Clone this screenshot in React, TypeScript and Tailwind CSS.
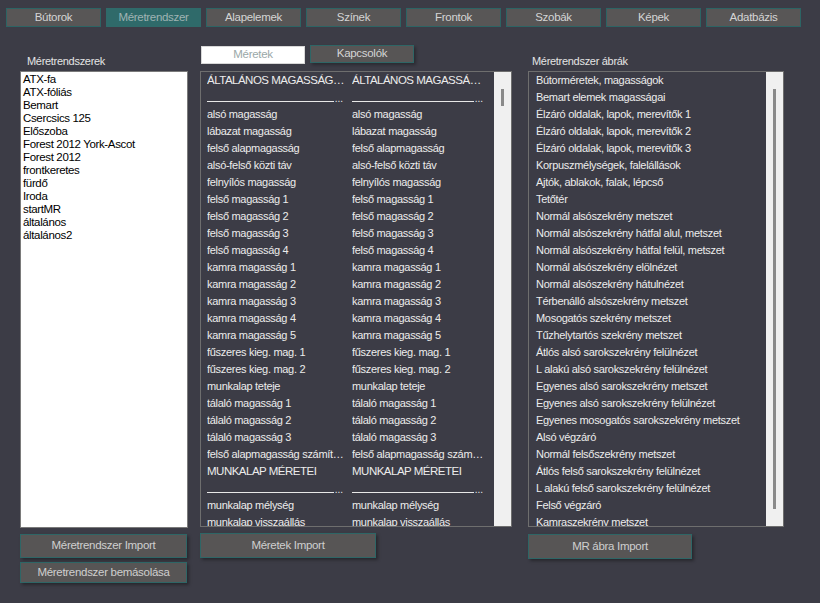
import React from "react";

const tabs = ["Bútorok", "Méretrendszer", "Alapelemek", "Színek", "Frontok", "Szobák", "Képek", "Adatbázis"];

const systems = [
  "ATX-fa",
  "ATX-fóliás",
  "Bemart",
  "Csercsics 125",
  "Előszoba",
  "Forest 2012 York-Ascot",
  "Forest 2012",
  "frontkeretes",
  "fürdő",
  "Iroda",
  "startMR",
  "általános",
  "általános2",
];

type Row = { t: string; kind?: "head" | "line" };

const sizes: Row[] = [
  { t: "ÁLTALÁNOS MAGASSÁGOK", kind: "head" },
  { t: "____________________________________", kind: "line" },
  { t: "alsó magasság" },
  { t: "lábazat magasság" },
  { t: "felső alapmagasság" },
  { t: "alsó-felső közti táv" },
  { t: "felnyílós magasság" },
  { t: "felső magasság 1" },
  { t: "felső magasság 2" },
  { t: "felső magasság 3" },
  { t: "felső magasság 4" },
  { t: "kamra magasság 1" },
  { t: "kamra magasság 2" },
  { t: "kamra magasság 3" },
  { t: "kamra magasság 4" },
  { t: "kamra magasság 5" },
  { t: "fűszeres kieg. mag. 1" },
  { t: "fűszeres kieg. mag. 2" },
  { t: "munkalap teteje" },
  { t: "tálaló magasság 1" },
  { t: "tálaló magasság 2" },
  { t: "tálaló magasság 3" },
  { t: "felső alapmagasság számítása" },
  { t: "MUNKALAP MÉRETEI", kind: "head" },
  { t: "____________________________________", kind: "line" },
  { t: "munkalap mélység" },
  { t: "munkalap visszaállás" },
];

const figures = [
  "Bútorméretek, magasságok",
  "Bemart elemek magasságai",
  "Élzáró oldalak, lapok, merevítők 1",
  "Élzáró oldalak, lapok, merevítők 2",
  "Élzáró oldalak, lapok, merevítők 3",
  "Korpuszmélységek, falelállások",
  "Ajtók, ablakok, falak, lépcső",
  "Tetőtér",
  "Normál alsószekrény metszet",
  "Normál alsószekrény hátfal alul, metszet",
  "Normál alsószekrény hátfal felül, metszet",
  "Normál alsószekrény elölnézet",
  "Normál alsószekrény hátulnézet",
  "Térbenálló alsószekrény metszet",
  "Mosogatós szekrény metszet",
  "Tűzhelytartós szekrény metszet",
  "Átlós alsó sarokszekrény felülnézet",
  "L alakú alsó sarokszekrény felülnézet",
  "Egyenes alsó sarokszekrény metszet",
  "Egyenes alsó sarokszekrény felülnézet",
  "Egyenes mosogatós sarokszekrény metszet",
  "Alsó végzáró",
  "Normál felsőszekrény metszet",
  "Átlós felső sarokszekrény felülnézet",
  "L alakú felső sarokszekrény felülnézet",
  "Felső végzáró",
  "Kamraszekrény metszet",
];

const font = "font-['Liberation_Sans',Arial,sans-serif]";

function Btn({ label, w, h }: { label: string; w: string; h: string }) {
  return (
    <div
      className={`${w} ${h} flex items-center justify-center bg-[#575555] border border-[#2e6666] text-[#cfcfcf] text-[11.5px] tracking-[-0.3px] shadow-[2px_2px_3px_rgba(0,0,0,0.35)]`}
    >
      {label}
    </div>
  );
}

function Cell({ r, w }: { r: Row; w: string }) {
  if (r.kind === "line") {
    return (
      <div className={`${w} h-[17px] flex items-end pb-[2px] overflow-hidden`}>
        <div className="flex-1 h-[1px] bg-[#e8e8e8] mb-[2px]" />
        <span className="text-[10px] leading-[10px] ml-[1px] mr-[3px]">...</span>
      </div>
    );
  }
  return (
    <div
      className={`${w} h-[17px] leading-[17px] whitespace-nowrap overflow-hidden text-ellipsis ${
        r.kind === "head" ? "text-[11.5px] tracking-[-0.5px]" : "text-[11px] tracking-[-0.3px]"
      }`}
    >
      {r.t}
    </div>
  );
}

export default function App() {
  return (
    <div className={`w-[820px] h-[603px] bg-[#3c3c46] overflow-hidden ${font} text-[#e6e6e6]`}>
      {/* top tabs */}
      <div className="flex gap-[5px] pl-[6px] pt-[8px]">
        {tabs.map((t, i) => (
          <div
            key={t}
            className={`w-[95px] h-[19px] flex items-center justify-center border text-[11.5px] tracking-[-0.3px] ${
              i === 1
                ? "bg-[#2f6a6a] border-[#2f6a6a] text-[#9fb3b3]"
                : "bg-[#585656] border-[#2c6464] text-[#d4d4d4]"
            }`}
          >
            {t}
          </div>
        ))}
      </div>

      <div className="flex mt-[18px]">
        {/* left column */}
        <div className="ml-[20px] w-[168px] flex flex-col">
          <div className="h-[26px] pl-[7px] pt-[8px] text-[11px] tracking-[-0.3px] text-[#e4e4e4]">Méretrendszerek</div>
          <div className="h-[457px] bg-white border border-[#7a7a7a] pl-[2px] pt-[1px] text-black text-[11.5px] tracking-[-0.35px]">
            {systems.map((s) => (
              <div key={s} className="h-[13px] leading-[13px] whitespace-nowrap">
                {s}
              </div>
            ))}
          </div>
          <div className="mt-[6px] flex flex-col gap-[4px]">
            <Btn label="Méretrendszer Import" w="w-[167px]" h="h-[24px]" />
            <Btn label="Méretrendszer bemásolása" w="w-[167px]" h="h-[21px]" />
          </div>
        </div>

        {/* middle column */}
        <div className="ml-[12px] w-[312px] flex flex-col">
          <div className="h-[26px] flex gap-[5px] pl-[1px]">
            <div className="mt-[1px] w-[104px] h-[18px] bg-white border border-[#d8d8d8] flex items-center justify-center text-[11.5px] tracking-[-0.3px] text-[#9aa8a8]">
              Méretek
            </div>
            <div className="w-[104px] h-[18px] bg-[#575555] border border-[#2e6666] flex items-center justify-center text-[11.5px] tracking-[-0.3px] text-[#d4d4d4] shadow-[2px_2px_3px_rgba(0,0,0,0.3)]">
              Kapcsolók
            </div>
          </div>
          <div className="h-[456px] border border-[#6e6e6e] flex overflow-hidden">
            <div className="flex-1 overflow-hidden pt-[0px] text-[#ececec]">
              {sizes.map((r, i) => (
                <div key={i} className="flex pl-[6px]">
                  <Cell r={r} w="w-[139px] mr-[6px]" />
                  <Cell r={r} w="w-[134px]" />
                </div>
              ))}
            </div>
            <div className="w-[17px] bg-[#f0f0f0] relative">
              <div className="absolute left-[7px] top-[17px] w-[3px] h-[17px] bg-[#8a8a8a]" />
            </div>
          </div>
          <div className="mt-[6px]">
            <Btn label="Méretek Import" w="w-[176px]" h="h-[25px]" />
          </div>
        </div>

        {/* right column */}
        <div className="ml-[16px] w-[256px] flex flex-col">
          <div className="h-[26px] pl-[4px] pt-[8px] text-[11px] tracking-[-0.3px] text-[#e4e4e4]">Méretrendszer ábrák</div>
          <div className="h-[456px] border border-[#6e6e6e] flex overflow-hidden">
            <div className="flex-1 overflow-hidden pl-[7px] text-[#ececec]">
              {figures.map((f) => (
                <div key={f} className="h-[17px] leading-[17px] whitespace-nowrap text-[11px] tracking-[-0.3px]">
                  {f}
                </div>
              ))}
            </div>
            <div className="w-[17px] bg-[#f0f0f0] relative">
              <div className="absolute left-[7px] top-[17px] w-[3px] h-[420px] bg-[#8a8a8a]" />
            </div>
          </div>
          <div className="mt-[7px]">
            <Btn label="MR ábra Import" w="w-[164px]" h="h-[25px]" />
          </div>
        </div>
      </div>
    </div>
  );
}
